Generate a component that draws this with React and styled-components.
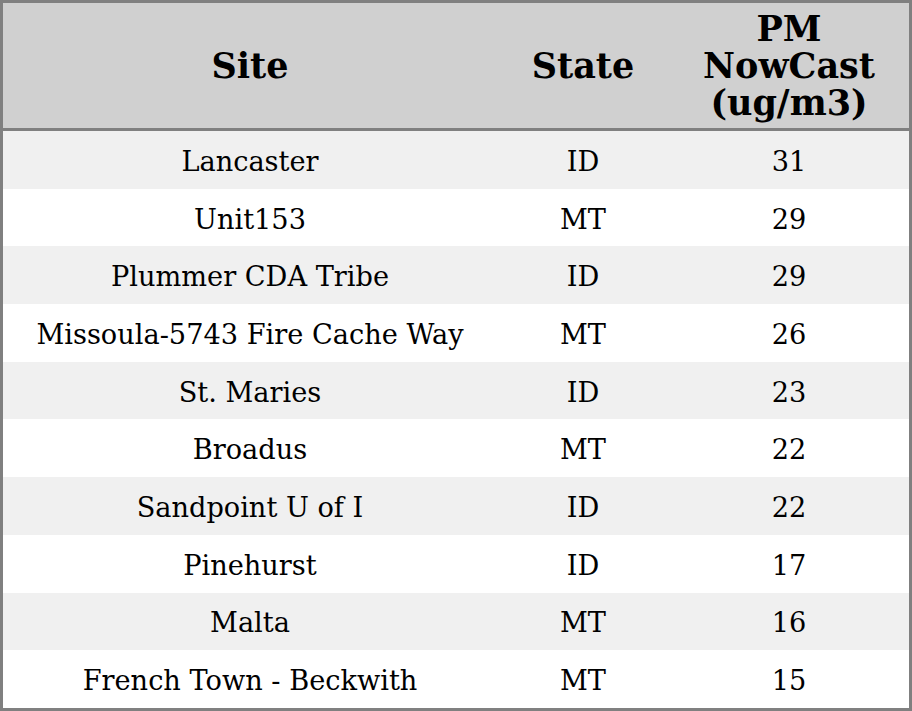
import React from "react";
import styled, { createGlobalStyle } from "styled-components";

const Global = createGlobalStyle`
  html, body { margin: 0; padding: 0; background: #fff; }
  body { font-family: "DejaVu Serif", serif; }
`;

const Table = styled.table`
  width: 912px;
  border-collapse: collapse;
  border: 3px solid #808080;
  font-family: "DejaVu Serif", serif;
  color: #000;
`;

const HeadRow = styled.tr`
  background: #d0d0d0;
  border-bottom: 3px solid #808080;
`;

const Th = styled.th`
  height: 125px;
  padding: 0;
  font-size: 35px;
  font-weight: bold;
  line-height: 37px;
  text-align: center;
  vertical-align: middle;
  width: ${(p) => p.$w}px;
`;

const Row = styled.tr`
  background: ${(p) => (p.$odd ? "#f0f0f0" : "#ffffff")};
`;

const Td = styled.td`
  height: 54.7px;
  padding: 3px 0 0;
  font-size: 27.2px;
  text-align: center;
  vertical-align: middle;
`;

const rows = [
  ["Lancaster", "ID", 31],
  ["Unit153", "MT", 29],
  ["Plummer CDA Tribe", "ID", 29],
  ["Missoula-5743 Fire Cache Way", "MT", 26],
  ["St. Maries", "ID", 23],
  ["Broadus", "MT", 22],
  ["Sandpoint U of I", "ID", 22],
  ["Pinehurst", "ID", 17],
  ["Malta", "MT", 16],
  ["French Town - Beckwith", "MT", 15],
];

export default function App() {
  return (
    <>
      <Global />
      <Table>
        <thead>
          <HeadRow>
            <Th $w={494}>Site</Th>
            <Th $w={172}>State</Th>
            <Th $w={240}>
              PM
              <br />
              NowCast
              <br />
              (ug/m3)
            </Th>
          </HeadRow>
        </thead>
        <tbody>
          {rows.map(([site, st, v], i) => (
            <Row key={site} $odd={i % 2 === 0}>
              <Td>{site}</Td>
              <Td>{st}</Td>
              <Td>{v}</Td>
            </Row>
          ))}
        </tbody>
      </Table>
    </>
  );
}
